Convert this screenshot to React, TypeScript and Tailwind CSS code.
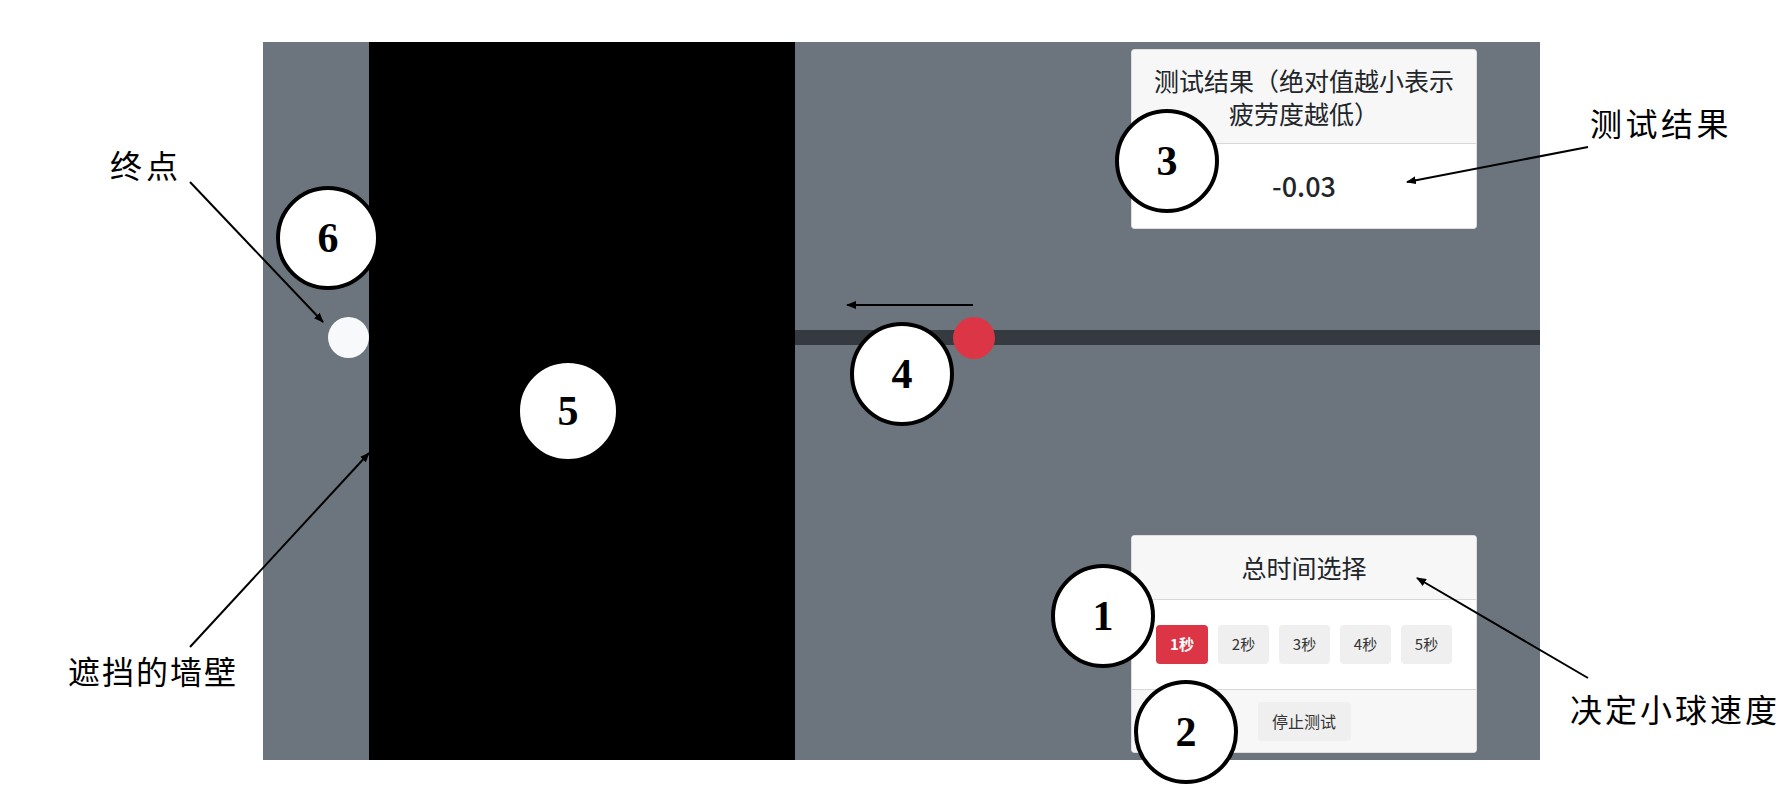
import React from "react";

const cjk = "font-['Noto_Sans_CJK_SC','Noto_Sans',sans-serif]";

function Marker({ n, className }: { n: string; className: string }) {
  return (
    <div
      className={`absolute w-[104px] h-[104px] rounded-full bg-white border-[4px] border-black flex items-center justify-center ${className}`}
    >
      <span className="font-['Liberation_Serif',serif] font-bold text-[42px] leading-none text-black">{n}</span>
    </div>
  );
}

function Note({ text, className }: { text: string; className: string }) {
  return (
    <div className={`absolute text-[32px] leading-none text-black ${cjk} ${className}`}>{text}</div>
  );
}

export default function App() {
  const times = ["1秒", "2秒", "3秒", "4秒", "5秒"];
  const active = 0;

  return (
    <div className={`relative w-[1790px] h-[793px] bg-white overflow-hidden ${cjk}`}>
      <div className="pl-[263px] pt-[42px]">
        <div className="flex w-[1277px] h-[718px] bg-[#6c757d]">
          {/* end point */}
          <div className="w-[106px] flex flex-col items-end pt-[275px]">
            <div className="w-[41px] h-[41px] rounded-full bg-[#f8f9fa]" />
          </div>

          {/* wall */}
          <div className="w-[426px] bg-black" />

          {/* track + cards */}
          <div className="flex-1 flex flex-col">
            <div className="self-end mr-[63px] mt-[7px] w-[346px] h-[180px] flex flex-col bg-white border border-[rgba(0,0,0,0.125)] rounded-[4px] overflow-hidden">
              <div className="h-[94px] px-[20px] flex items-center justify-center text-center bg-[#f7f7f7] border-b border-[rgba(0,0,0,0.125)] text-[25px] leading-[33px] text-[#212529]">
                测试结果（绝对值越小表示疲劳度越低）
              </div>
              <div className="flex-1 flex items-center justify-center text-[27px] font-medium text-[#212529]">-0.03</div>
            </div>

            <div className="relative mt-[101px] h-[15px] bg-[#343a40]">
              <div className="absolute left-[158px] top-[-13px] w-[42px] h-[42px] rounded-full bg-[#dc3545]" />
            </div>

            <div className="self-end mr-[63px] mt-auto mb-[7px] w-[346px] h-[218px] flex flex-col bg-white border border-[rgba(0,0,0,0.125)] rounded-[4px] overflow-hidden">
              <div className="h-[64px] flex items-center justify-center bg-[#f7f7f7] border-b border-[rgba(0,0,0,0.125)] text-[25px] text-[#212529]">
                总时间选择
              </div>
              <div className="h-[89px] flex items-center justify-center gap-[10px]">
                {times.map((t, i) => (
                  <button
                    key={t}
                    className={
                      i === active
                        ? "w-[52px] h-[39px] rounded-[4px] bg-[#dc3545] text-white font-bold text-[15px]"
                        : "w-[51px] h-[39px] rounded-[4px] bg-[#efefef] text-[#333] text-[15px]"
                    }
                  >
                    {t}
                  </button>
                ))}
              </div>
              <div className="flex-1 flex items-center justify-center bg-[#f7f7f7] border-t border-[rgba(0,0,0,0.125)]">
                <button className="w-[93px] h-[39px] rounded-[4px] bg-[#efefef] text-[#333] text-[16px]">停止测试</button>
              </div>
            </div>
          </div>
        </div>
      </div>

      {/* annotations */}
      <svg className="absolute inset-0 pointer-events-none" width="1790" height="793" viewBox="0 0 1790 793">
        <defs>
          <marker id="head" markerWidth="10" markerHeight="8" refX="9" refY="4" orient="auto" markerUnits="userSpaceOnUse">
            <path d="M0,0 L10,4 L0,8 Z" fill="#000" />
          </marker>
        </defs>
        <g stroke="#000" strokeWidth="2" fill="none" markerEnd="url(#head)">
          <line x1="190" y1="182" x2="323" y2="322" />
          <line x1="190" y1="647" x2="369" y2="453" />
          <line x1="1588" y1="147" x2="1407" y2="182" />
          <line x1="1588" y1="678" x2="1417" y2="578" />
          <line x1="973" y1="305" x2="847" y2="305" />
        </g>
      </svg>

      <Note text="终点" className="left-[110px] top-[148px] tracking-[4px]" />
      <Note text="遮挡的墙壁" className="left-[68px] top-[654px] tracking-[2px]" />
      <Note text="测试结果" className="left-[1590px] top-[106px] tracking-[3.5px]" />
      <Note text="决定小球速度" className="left-[1570px] top-[692px] tracking-[3px]" />

      <Marker n="6" className="left-[276px] top-[186px]" />
      <Marker n="5" className="left-[516px] top-[359px]" />
      <Marker n="4" className="left-[850px] top-[322px]" />
      <Marker n="3" className="left-[1115px] top-[109px]" />
      <Marker n="1" className="left-[1051px] top-[564px]" />
      <Marker n="2" className="left-[1134px] top-[680px]" />
    </div>
  );
}
